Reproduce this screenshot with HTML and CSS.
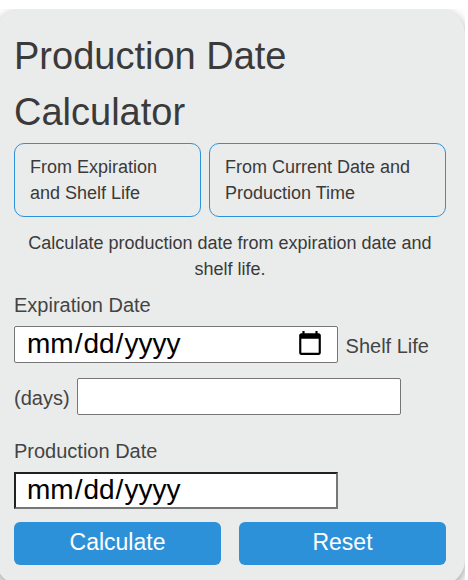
FILE: index.html
```html
<!DOCTYPE html>
<html lang="en-US">
<head>
<meta charset="utf-8">
<meta name="viewport" content="width=device-width, initial-scale=1">
<title>Production Date Calculator</title>
<link rel="stylesheet" href="styles.css">
</head>
<body>
<main class="stage">
  <form class="card">
    <h1 class="title">Production Date Calculator</h1>
    <div class="tabs">
      <button type="button" class="tab">From Expiration and Shelf Life</button>
      <button type="button" class="tab">From Current Date and Production Time</button>
    </div>
    <p class="intro">Calculate production date from expiration date and shelf life.</p>
    <div class="fields">
      <label class="label-block" for="expiration">Expiration Date</label>
      <input class="field" type="date" id="expiration">
      <label class="label-inline" for="shelf-life">Shelf Life (days)</label>
      <input class="field" type="text" inputmode="numeric" id="shelf-life">
    </div>
    <div class="result">
      <label class="label-block" for="production">Production Date</label>
      <input class="field field-result" type="date" id="production" readonly>
    </div>
    <div class="actions">
      <button type="button" class="action">Calculate</button>
      <button type="reset" class="action">Reset</button>
    </div>
  </form>
</main>
</body>
</html>
```
FILE: styles.css
```css
* {
  box-sizing: border-box;
}

body {
  margin: 0;
  background: #fff;
  color: #3a3a3a;
  font-family: "Liberation Sans", Arial, sans-serif;
  font-size: 18px;
  line-height: 26px;
}

.stage {
  margin: 9px 3px 0 0;
  height: calc(100vh - 9px);
  overflow: hidden;
}

.card {
  margin-left: -4px;
  padding: 19px 19px 20px 18px;
  border-radius: 25px;
  background: #eaeceb;
  box-shadow: 0 4px 12px rgba(0, 0, 0, 0.4);
}

.title {
  margin: 0 0 3px;
  font-size: 38px;
  font-weight: 400;
  line-height: 56px;
}

.tabs {
  display: grid;
  grid-template-columns: 187fr 237fr;
  gap: 8px;
}

.tab {
  padding: 10px 15px;
  border: 1px solid #2d91d9;
  border-radius: 10px;
  background: transparent;
  color: inherit;
  font: inherit;
  text-align: left;
}

.intro {
  margin: 13px 0 10px;
  text-align: center;
}

.fields,
.result {
  color: #444;
  font-size: 20px;
  line-height: 52px;
}

.label-block {
  display: block;
  margin-bottom: 2px;
  line-height: 26px;
}

.label-inline {
  margin: 0 2px;
}

.field {
  width: 324px;
  max-width: 100%;
  height: 37px;
  margin: 0;
  padding: 0 11px;
  border: 1px solid #767676;
  border-radius: 2px;
  background: #fff;
  color: #000;
  font-family: inherit;
  font-size: 28px;
}

.result {
  margin-top: 14px;
}

.field-result {
  padding: 0 10px;
  border: 2px inset #767676;
  border-radius: 0;
}

.actions {
  display: flex;
  gap: 18px;
  margin-top: 4px;
}

.action {
  flex: 1 1 0;
  height: 43px;
  padding: 0 0 3px;
  border: 0;
  border-radius: 6px;
  background: #2d91d9;
  color: #fff;
  font-family: inherit;
  font-size: 23px;
}
```
